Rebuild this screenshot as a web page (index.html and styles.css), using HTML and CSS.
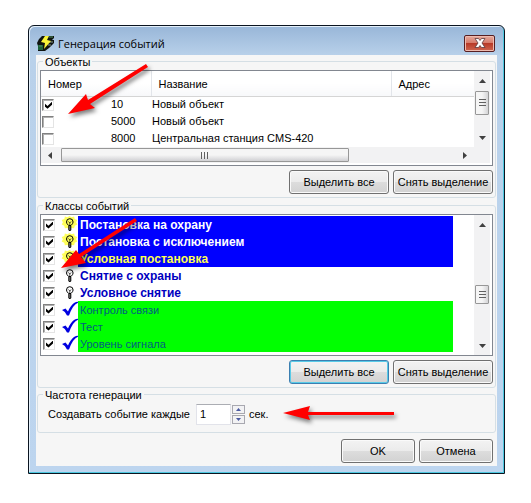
FILE: index.html
```html
<!DOCTYPE html>
<html lang="ru">
<head>
  <meta charset="UTF-8" />
  <meta name="viewport" content="width=device-width, initial-scale=1.0" />
  <title>Генерация событий</title>
  <link rel="stylesheet" href="styles.css">
</head>
<body>
  <svg class="defs" width="0" height="0">
    <symbol id="bulb" viewBox="0 0 17 17">
      <path d="M5.500 6 a3.300 3.300 0 1 1 6.600 0 q0 1.500 -2.100 3.500 h-2.400 q-2.100 -2 -2.100 -3.500z" fill="none" stroke="#000" stroke-width="1" />
      <path d="M7.500 5.500 l1.300 1.500 l1.300 -1.500 M8.800 7 v3" fill="none" stroke="#000" stroke-width=".7" />
      <path d="M7.300 10 h3 v4 l-1 1 h-1 l-1 -1z" fill="#000" />
      <path d="M8.300 10.500 h1 v1 h-1z M8.300 12.500 h1 v1 h-1z" fill="#fff" />
    </symbol>
    <symbol id="glow" viewBox="0 0 17 17">
      <path d="M8.500 0 l2 1.2 2.6 -.8 .6 2.5 2.6 1.1 -1.2 2.2 1.2 2.4 -2.5 1.1 -.7 2.5 -2.5 -.3 -2.1 1.6 -2.1 -1.6 -2.5 .3 -.7 -2.5 -2.5 -1.1 1.2 -2.4 -1.2 -2.2 2.6 -1.1 .6 -2.5 2.6 .8z" fill="#ffff5a" />
    </symbol>
    <symbol id="mark" viewBox="0 0 17 17">
      <path d="M1 9 L4.500 7.500 L7 10.500 Q9.500 4.500 13 2 Q15 .8 17 .8 V1.800 Q12 3.500 8 14.500 H6 Q4.500 10.500 1 9z" fill="#0000e0" />
    </symbol>
    <symbol id="up" viewBox="0 0 7 4"><path d="M0 4 L3.500 0 L7 4z" fill="currentColor" /></symbol>
    <symbol id="down" viewBox="0 0 7 4"><path d="M0 0 H7 L3.500 4z" fill="currentColor" /></symbol>
  </svg>

  <main class="window">
    <header class="titlebar">
      <svg class="logo" viewBox="0 0 18 18">
        <path d="M5 2 H17 V4 L15 6 H17 V9 L12 14 L8 17 H1 V12 L0 9 L2 5z" fill="#101410" />
        <path d="M1 11 H6 V16 H1z" fill="#1c6038" />
        <path d="M2 12 H5 M12 3 H16" stroke="#4c9060" stroke-width="1" />
        <path d="M12 8 H16 M11 11 H14" stroke="#8a9890" stroke-width="1" />
        <path d="M8 2 H12 L10 6 L14 7 L7 15 L8 9 L4 8z" fill="#f8f438" />
      </svg>
      <h1 class="title">Генерация событий</h1>
      <button class="close" aria-label="Закрыть">
        <svg width="12" height="10" viewBox="0 0 12 10">
          <path d="M1 .5 H4.500 L6 2.500 L7.500 .5 H11 L8 5 L11 9.500 H7.500 L6 7.500 L4.500 9.500 H1 L4 5z" fill="#fff" stroke="#5c3a3c" stroke-width=".8" />
        </svg>
      </button>
    </header>

    <form class="client">
      <fieldset class="group">
        <legend>Объекты</legend>
        <div class="list objects">
          <div class="view">
            <table>
              <thead>
                <tr><th class="col-num">Номер</th><th class="col-name">Название</th><th>Адрес</th></tr>
              </thead>
              <tbody>
                <tr>
                  <td><label class="pick"><input type="checkbox" class="check" checked>10</label></td>
                  <td>Новый объект</td><td></td>
                </tr>
                <tr>
                  <td><label class="pick"><input type="checkbox" class="check">5000</label></td>
                  <td>Новый объект</td><td></td>
                </tr>
                <tr>
                  <td><label class="pick"><input type="checkbox" class="check">8000</label></td>
                  <td>Центральная станция CMS-420</td><td></td>
                </tr>
              </tbody>
            </table>
          </div>
          <div class="vscroll">
            <svg class="tip" width="7" height="4"><use href="#up" /></svg>
            <span class="thumb thumb-top"></span>
            <svg class="tip" width="7" height="4"><use href="#down" /></svg>
          </div>
          <div class="hscroll">
            <svg class="side" width="4" height="7" viewBox="0 0 4 7"><path d="M4 0 V7 L0 3.500z" /></svg>
            <span class="thumb wide"></span>
            <svg class="side" width="4" height="7" viewBox="0 0 4 7"><path d="M0 0 V7 L4 3.500z" /></svg>
          </div>
        </div>
        <div class="buttons">
          <button type="button" class="btn">Выделить все</button>
          <button type="button" class="btn">Снять выделение</button>
        </div>
      </fieldset>

      <fieldset class="group classes-group">
        <legend>Классы событий</legend>
        <div class="list classes">
          <div class="rows">
            <label class="row"><input type="checkbox" class="check" checked><svg class="icon"><use href="#glow" /><use href="#bulb" /></svg><span class="name alarm">Постановка на охрану</span></label>
            <label class="row"><input type="checkbox" class="check" checked><svg class="icon"><use href="#glow" /><use href="#bulb" /></svg><span class="name alarm">Постановка с исключением</span></label>
            <label class="row"><input type="checkbox" class="check" checked><svg class="icon"><use href="#glow" /><use href="#bulb" /></svg><span class="name alarm yellow">Условная постановка</span></label>
            <label class="row"><input type="checkbox" class="check" checked><svg class="icon"><use href="#bulb" /></svg><span class="name off">Снятие с охраны</span></label>
            <label class="row"><input type="checkbox" class="check" checked><svg class="icon"><use href="#bulb" /></svg><span class="name off">Условное снятие</span></label>
            <label class="row"><input type="checkbox" class="check" checked><svg class="icon"><use href="#mark" /></svg><span class="name test">Контроль связи</span></label>
            <label class="row"><input type="checkbox" class="check" checked><svg class="icon"><use href="#mark" /></svg><span class="name test">Тест</span></label>
            <label class="row"><input type="checkbox" class="check" checked><svg class="icon"><use href="#mark" /></svg><span class="name test">Уровень сигнала</span></label>
          </div>
          <div class="vscroll">
            <svg class="tip" width="7" height="4"><use href="#up" /></svg>
            <span class="thumb thumb-low"></span>
            <svg class="tip" width="7" height="4"><use href="#down" /></svg>
          </div>
        </div>
        <div class="buttons">
          <button type="button" class="btn focused">Выделить все</button>
          <button type="button" class="btn">Снять выделение</button>
        </div>
      </fieldset>

      <fieldset class="group">
        <legend>Частота генерации</legend>
        <div class="rate">
          <label for="period">Создавать событие каждые</label>
          <input type="text" id="period" class="period" value="1">
          <span class="spin">
            <button type="button" aria-label="Больше"><svg width="5" height="3"><use href="#up" /></svg></button>
            <button type="button" aria-label="Меньше"><svg width="5" height="3"><use href="#down" /></svg></button>
          </span>
          <span>сек.</span>
        </div>
      </fieldset>

      <div class="buttons actions">
        <button type="button" class="btn small">OK</button>
        <button type="button" class="btn small">Отмена</button>
      </div>
    </form>

    <!-- red pointers over the dialog -->
    <svg class="arrow arrow-objects" width="90" height="60" viewBox="0 0 90 60">
      <path d="M4 52 L22 32 L24 38 L82 2 L84 5 L26 42 L31 46z" />
    </svg>
    <svg class="arrow arrow-classes" width="90" height="60" viewBox="0 0 90 60">
      <path d="M4 52 L19 34 L22 38 L78 2 L80 5 L24 41 L29 47z" />
    </svg>
    <svg class="arrow arrow-rate" width="120" height="24" viewBox="0 0 120 24">
      <path d="M3 9 L30 2 L28 8 H114 V11 H28 L30 16z" />
    </svg>
  </main>
  <script>
    let period = document.querySelector(".period");
    let spin = document.querySelectorAll(".spin button");

    spin[0].addEventListener("click", () => {
      period.value = Number(period.value) + 1;
    });
    spin[1].addEventListener("click", () => {
      period.value = Math.max(1, Number(period.value) - 1);
    });

    document.querySelectorAll(".list").forEach((list) => {
      let buttons = list.parentElement.querySelectorAll(".btn");
      buttons.forEach((btn, i) => {
        btn.addEventListener("click", () => {
          list.querySelectorAll(".check").forEach((box) => {
            box.checked = i === 0;
          });
        });
      });
    });
  </script>
</body>
</html>
```

FILE: styles.css
```css
* {
  margin: 0;
  padding: 0;
  box-sizing: border-box;
}
body {
  background-color: white;
  padding: 25px 26px 20px 28px;
  font-family: "Liberation Sans", Arial, sans-serif;
  font-size: 11px;
  line-height: 13px;
  color: black;
}
.defs {
  position: absolute;
}
button, input {
  font: inherit;
  color: inherit;
}
.window {
  position: relative;
  border: 1px solid #0a1420;
  border-radius: 6px 6px 0 0;
  padding: 0 7px 7px;
  background: linear-gradient(#98b6d8, #b9d1ea 30px, #bdd5ef);
  box-shadow: inset -1px -1px #4cc8e0, inset 1px 1px #e4f0fa;
}
.titlebar {
  display: flex;
  align-items: center;
  height: 29px;
  padding: 5px 2px 0 1px;
}
.logo {
  width: 18px;
  height: 18px;
}
.title {
  flex: 1;
  margin-left: 3px;
  font-family: "Open Sans", sans-serif;
  font-size: 11px;
  font-weight: normal;
}
.close {
  display: flex;
  align-items: center;
  justify-content: center;
  width: 31px;
  height: 17px;
  border: 1px solid #571f22;
  border-radius: 2px;
  background: linear-gradient(#e5a99c, #d77c6c 45%, #b83a28 50%, #cf6650);
  box-shadow: inset 0 0 0 1px #eebbb0;
}
.client {
  padding: 0 1px 3px;
  background-color: #f6f6f6;
}
.group {
  min-width: 0;
  border: 1px solid #d5dfe5;
  border-radius: 3px;
  padding: 2px 2px 3px;
}
.classes-group {
  margin-top: 1px;
}
legend {
  margin-left: 3px;
  padding: 0 2px;
  height: 13px;
  line-height: 15px;
}
.list {
  border: 1px solid #828790;
  padding-right: 2px;
  background-color: white;
}
.objects {
  display: grid;
  grid-template-columns: 1fr 16px;
  grid-template-rows: 76px 16px;
  padding-bottom: 2px;
}
.view {
  min-width: 0;
}
table {
  width: 100%;
  table-layout: fixed;
  border-collapse: collapse;
}
th {
  height: 25px;
  padding: 3px 7px 0;
  text-align: left;
  font-weight: normal;
  border-right: 1px solid #e2e5ea;
  border-bottom: 1px solid #d5d5d5;
  background: linear-gradient(white 50%, #f7f8fa);
}
th:last-child {
  border-right: none;
}
.col-num {
  width: 110px;
}
.col-name {
  width: 240px;
}
td {
  height: 17px;
  padding-left: 1px;
  white-space: nowrap;
}
.pick {
  display: flex;
  align-items: center;
  gap: 57px;
}
.check {
  flex: none;
  appearance: none;
  width: 12px;
  height: 12px;
  border: 1px solid;
  border-color: #808080 #e4e4e4 #e4e4e4 #808080;
  box-shadow: inset 1px 1px #b0b0b0;
  background-color: white;
}
.check:checked::after {
  content: "";
  display: block;
  width: 7px;
  height: 7px;
  margin: 2px;
  background-color: black;
  clip-path: polygon(0 29%, 36% 60%, 100% 0, 100% 42%, 36% 100%, 0 71%);
}
.vscroll {
  display: flex;
  flex-direction: column;
  align-items: center;
  padding: 8px 0 7px;
  background-color: #f2f2f3;
  color: #404040;
}
.tip {
  flex: none;
}
.thumb {
  display: flex;
  align-items: center;
  justify-content: center;
  border: 1px solid #979797;
  border-radius: 1px;
}
.vscroll .thumb {
  width: 14px;
  background: linear-gradient(90deg, #f5f5f5 50%, #d4d4d6);
}
.vscroll .thumb::after {
  content: "";
  width: 7px;
  height: 8px;
  background: repeating-linear-gradient(#606060 0 1px, transparent 1px 3px);
}
.thumb-top {
  height: 24px;
  margin: 8px 0 auto;
}
.thumb-low {
  height: 19px;
  margin: 58px 0 auto;
}
.hscroll {
  display: flex;
  align-items: center;
  justify-content: space-between;
  grid-column: 1 / 3;
  padding: 0 23px 0 7px;
  background-color: #f2f2f3;
}
.side {
  flex: none;
  fill: #404040;
}
.wide {
  width: 288px;
  height: 14px;
  margin: 0 auto 0 9px;
  background: linear-gradient(#f5f5f5 50%, #d0d0d3);
}
.wide::after {
  content: "";
  width: 8px;
  height: 7px;
  background: repeating-linear-gradient(90deg, #606060 0 1px, transparent 1px 3px);
}
.buttons {
  display: flex;
  justify-content: flex-end;
  gap: 4px;
  margin-top: 4px;
}
.btn {
  width: 100px;
  height: 24px;
  border: 1px solid #707070;
  border-radius: 3px;
  background: linear-gradient(#f3f3f3, #ebebeb 50%, #dddddd 50%, #d2d2d2);
  box-shadow: inset 0 0 0 1px #fafafa;
  white-space: nowrap;
}
.focused {
  border-color: #3c7fb1;
  box-shadow: inset 0 0 0 1px #58cbe8;
}
.small {
  width: 74px;
}
.classes {
  display: grid;
  grid-template-columns: 1fr 16px;
}
.rows {
  min-width: 0;
  padding: 1px 21px 3px 2px;
}
.row {
  display: flex;
  align-items: center;
  height: 17px;
}
.icon {
  flex: none;
  width: 17px;
  height: 17px;
  margin-left: 6px;
}
.name {
  flex: 1;
  padding: 3px 2px 1px;
  height: 17px;
}
.alarm {
  background-color: #0000ff;
  color: white;
  font-size: 12px;
  font-weight: bold;
}
.yellow {
  color: #ffff50;
}
.off {
  color: #0000c0;
  font-size: 12px;
  font-weight: bold;
}
.test {
  background-color: #00ff00;
  color: #006080;
}
.rate {
  display: flex;
  align-items: center;
  padding: 1px 0 4px 8px;
}
.period {
  width: 35px;
  height: 21px;
  margin-left: 6px;
  padding: 0 3px 2px;
  border: 1px solid #e2e3ea;
  border-top-color: #abadb3;
  background-color: white;
}
.spin {
  display: flex;
  flex-direction: column;
  gap: 1px;
  margin: 0 4px 0 1px;
}
.spin button {
  display: flex;
  align-items: center;
  justify-content: center;
  width: 13px;
  height: 9px;
  border: 1px solid #a8a8b0;
  background-color: #f2f2f4;
  color: #4858a0;
}
.actions {
  margin-top: 6px;
  padding-right: 3px;
}
.arrow {
  position: absolute;
  fill: #ff0000;
  pointer-events: none;
  filter: drop-shadow(2px 3px 2px rgba(0, 0, 0, 0.5));
}
.arrow-objects {
  left: 35px;
  top: 36px;
}
.arrow-classes {
  left: 28px;
  top: 190px;
}
.arrow-rate {
  left: 251px;
  top: 378px;
}
```
